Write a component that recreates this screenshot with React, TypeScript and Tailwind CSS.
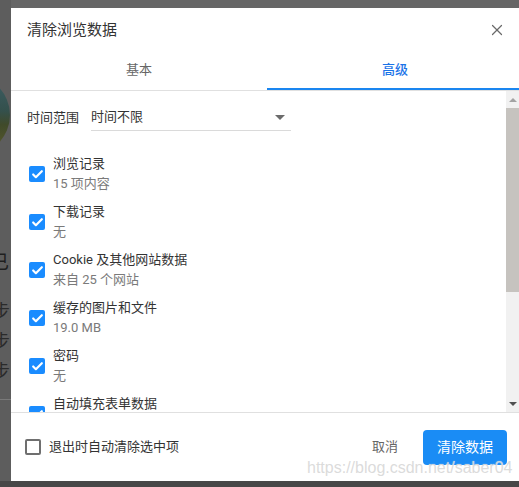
import { Check, X } from "lucide-react";

type DataItem = {
  title: string;
  detail: string;
};

const items: DataItem[] = [
  { title: "浏览记录", detail: "15 项内容" },
  { title: "下载记录", detail: "无" },
  { title: "Cookie 及其他网站数据", detail: "来自 25 个网站" },
  { title: "缓存的图片和文件", detail: "19.0 MB" },
  { title: "密码", detail: "无" },
  { title: "自动填充表单数据", detail: "" },
];

const font = "font-['Roboto','Noto_Sans_CJK_SC',sans-serif]";

function Checkbox({ checked }: { checked: boolean }) {
  return checked ? (
    <span className="flex h-4 w-4 shrink-0 items-center justify-center rounded-[2px] bg-[#1a8cff]">
      <Check className="h-[13px] w-[13px] text-white" strokeWidth={4} />
    </span>
  ) : (
    <span className="h-4 w-4 shrink-0 rounded-[2px] border-2 border-[#6f6f6f]" />
  );
}

function BackdropStrip() {
  return (
    <div className="flex h-full w-[11px] shrink-0 flex-col overflow-hidden bg-[#5d5d5d]">
      <div className="ml-[-70px] mt-[75px] h-[80px] w-[80px] shrink-0 rounded-full bg-[linear-gradient(#3d5f66,#34504c_45%,#404a2a_62%,#5d5c2c)]" />
      <div className="ml-[-10px] mt-[98px] text-[19px] leading-[20px] text-[#1f1f1f]">已</div>
      <div className="ml-[-8px] mt-[29px] flex flex-col gap-[11px] text-[18px] leading-[19px] text-[#2a2a2a]">
        <span>步</span>
        <span>步</span>
        <span>步</span>
      </div>
      <div className="mt-[18px] h-px w-full bg-[#7a7a7a]" />
    </div>
  );
}

function Scrollbar() {
  return (
    <div className="flex w-[17px] shrink-0 flex-col items-start bg-[#f1f1f1]">
      <div className="flex h-[17px] w-[13px] items-center justify-center">
        <span className="h-0 w-0 border-x-[4px] border-b-[4px] border-x-transparent border-b-[#a3a3a3]" />
      </div>
      <div className="h-[184px] w-[13px] bg-[#c6c3bf]" />
      <div className="flex-1" />
      <div className="flex h-[17px] w-[13px] items-center justify-center">
        <span className="h-0 w-0 border-x-[4px] border-t-[4px] border-x-transparent border-t-[#505050]" />
      </div>
    </div>
  );
}

export default function App() {
  return (
    <div className={`flex h-[487px] w-[519px] flex-col overflow-hidden bg-[#666] ${font}`}>
      <div className="flex h-[481px] shrink-0">
        <BackdropStrip />
        <div className="mt-[8px] flex h-[473px] w-[512px] shrink-0 flex-col bg-white">
          <div className="flex items-center justify-between pl-4 pr-[17px] pt-[12px]">
            <span className="text-[15px] leading-5 text-[#333]">清除浏览数据</span>
            <X className="h-[18px] w-[18px] text-[#6a6a6a]" strokeWidth={1.6} />
          </div>

          <div className="mt-[10px] flex border-b border-[#e0e0e0]">
            <div className="flex h-[40px] flex-1 items-center justify-center text-[13px] text-[#666]">
              基本
            </div>
            <div className="flex h-[40px] flex-1 items-center justify-center border-b-2 border-[#1a86f0] pt-[2px] text-[13px] font-medium text-[#1a73e8]">
              高级
            </div>
          </div>

          <div className="flex h-[321px] shrink-0">
            <div className="flex flex-1 flex-col overflow-hidden pl-4">
              <div className="mt-[7px] flex h-[40px] shrink-0 items-center gap-[12px]">
                <span className="text-[13px] text-[#333]">时间范围</span>
                <div className="flex h-[26px] w-[200px] items-center justify-between border-b border-[#dadada] pb-[1px] pr-[6px]">
                  <span className="text-[13px] text-[#333]">时间不限</span>
                  <span className="h-0 w-0 border-x-[5px] border-t-[5px] border-x-transparent border-t-[#6b6b6b]" />
                </div>
              </div>

              <div className="mt-[12px] flex flex-col">
                {items.map((item) => (
                  <div key={item.title} className="flex h-[48px] shrink-0 items-center gap-2 pl-[2px]">
                    <Checkbox checked />
                    <div className="flex flex-col text-[13px] leading-[20px]">
                      <span className="text-[#333]">{item.title}</span>
                      <span className="min-h-[20px] text-[#7a7a7a]">{item.detail}</span>
                    </div>
                  </div>
                ))}
              </div>
            </div>
            <Scrollbar />
          </div>

          <div className="relative flex flex-1 items-center border-t border-[#e0e0e0] pl-[14px] pr-[16px]">
            <div className="flex items-center gap-2">
              <Checkbox checked={false} />
              <span className="text-[13px] text-[#333]">退出时自动清除选中项</span>
            </div>
            <span className="ml-auto mr-[25px] text-[13px] text-[#666]">取消</span>
            <button
              type="button"
              className="h-[35px] w-[84px] rounded-[4px] bg-[#1a8cf5] text-[14px] text-white"
            >
              清除数据
            </button>
            <span className="absolute bottom-[3px] left-[296px] font-['Liberation_Sans',sans-serif] text-[16px] leading-5 text-[#d2d2d2]/80 [text-shadow:0_0_1px_rgba(255,255,255,0.9)]">
              https://blog.csdn.net/saber04
            </span>
          </div>
        </div>
      </div>
      <div className="flex-1 bg-[#474747]" />
    </div>
  );
}
